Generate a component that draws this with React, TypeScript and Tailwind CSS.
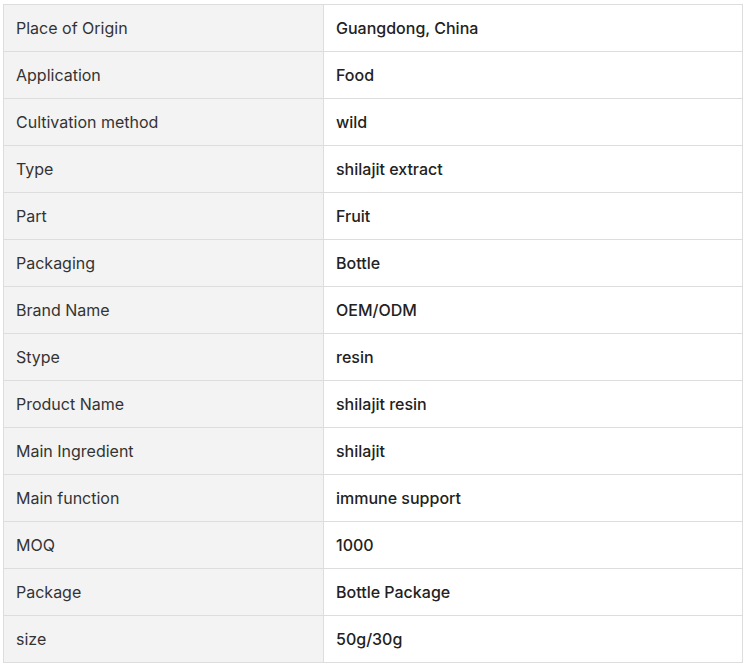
const rows: [string, string][] = [
  ["Place of Origin", "Guangdong, China"],
  ["Application", "Food"],
  ["Cultivation method", "wild"],
  ["Type", "shilajit extract"],
  ["Part", "Fruit"],
  ["Packaging", "Bottle"],
  ["Brand Name", "OEM/ODM"],
  ["Stype", "resin"],
  ["Product Name", "shilajit resin"],
  ["Main Ingredient", "shilajit"],
  ["Main function", "immune support"],
  ["MOQ", "1000"],
  ["Package", "Bottle Package"],
  ["size", "50g/30g"],
]

export default function App() {
  return (
    <div className="min-h-screen bg-white pl-[3px] pt-[4px]" style={{ fontFamily: "Inter, 'Noto Sans', sans-serif" }}>
      <table className="w-[740px] table-fixed border-collapse text-[16px] leading-6">
        <tbody>
          {rows.map(([label, value]) => (
            <tr key={label} className="h-[47px]">
              <td className="w-[320px] border border-[#dddddd] bg-[#f3f3f3] px-3 text-[#333333]">{label}</td>
              <td className="border border-[#dddddd] bg-white px-3 font-medium text-[#222222]">{value}</td>
            </tr>
          ))}
        </tbody>
      </table>
    </div>
  )
}
